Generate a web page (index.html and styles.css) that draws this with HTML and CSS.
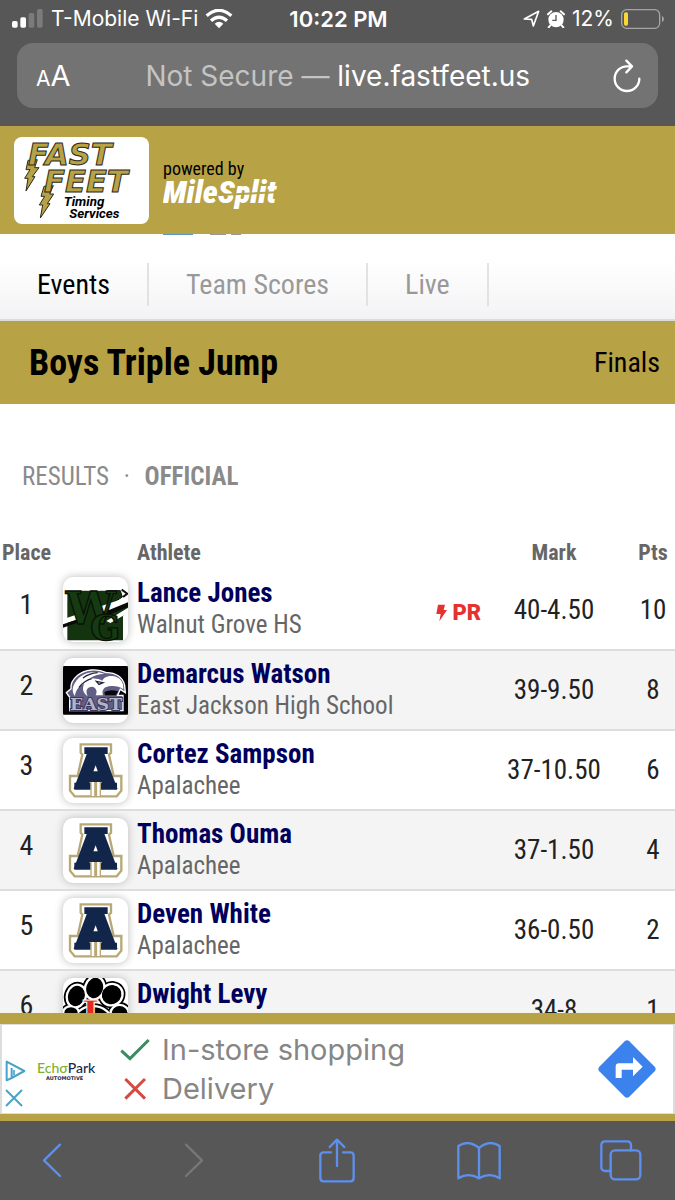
FILE: index.html
```html
<!DOCTYPE html>
<html lang="en">
<head>
<meta charset="utf-8">
<meta name="viewport" content="width=device-width, initial-scale=1">
<title>Boys Triple Jump - Finals</title>
<link rel="stylesheet" href="styles.css">
</head>
<body>
<svg class="defs" aria-hidden="true">
  <symbol id="apalachee" viewBox="0 0 195 195">
    <path d="M53 19H144V44L138 50L152 114H175V158L161 175H35L21 158V114H44L58 50L53 44Z" fill="#fff" stroke="#b8a876" stroke-width="7"/>
    <path d="M84 174V115H112V174" fill="#fff" stroke="#b8a876" stroke-width="4"/>
    <path d="M98 115V175" stroke="#b8a876" stroke-width="9"/>
    <text x="98" y="148" text-anchor="middle" class="letter" font-size="150">A</text>
    <path d="M64 28H134V48H64ZM34 134H82V155H34ZM114 134H162V155H114Z" fill="#12264b"/>
  </symbol>
  <symbol id="toes" viewBox="0 0 195 195" overflow="visible">
    <ellipse cx="40" cy="54" rx="23" ry="29" transform="rotate(18 40 54)"/><ellipse cx="95" cy="30" rx="23" ry="29" transform="rotate(16 95 30)"/><ellipse cx="146" cy="50" rx="28" ry="26" transform="rotate(-35 146 50)"/><ellipse cx="24" cy="104" rx="18" ry="14"/><ellipse cx="170" cy="106" rx="22" ry="20"/><ellipse cx="90" cy="134" rx="52" ry="44"/>
  </symbol>
</svg>

<header class="browser-top">
  <div class="status">
    <div class="status-left">
      <svg width="32" height="20" viewBox="0 0 96 60"><rect x="0" y="36" width="17" height="20" rx="5" fill="#fff"/><rect x="25" y="25" width="17" height="31" rx="5" fill="#fff"/><rect x="50" y="12" width="17" height="44" rx="5" fill="#7b7b7b"/><rect x="75" y="0" width="17" height="56" rx="5" fill="#7b7b7b"/></svg>
      <span>T-Mobile Wi-Fi</span>
      <svg width="28" height="20" viewBox="0 0 84 60" fill="none" stroke="#fff" stroke-width="10"><path d="M5 20Q42-12 79 20"/><path d="M18 35Q42 14 66 35"/><path d="M29 44Q42 33 55 44L42 58Z" fill="#fff" stroke="none"/></svg>
    </div>
    <time class="clock">10:22 PM</time>
    <div class="status-right">
      <svg width="17" height="18" viewBox="0 0 51 54"><path d="M4 27L47 4L31 48L26 28Z" fill="none" stroke="#fff" stroke-width="5" stroke-linejoin="round"/></svg>
      <svg width="18" height="18" viewBox="0 0 54 54"><circle cx="27" cy="29" r="23" fill="#fff"/><path d="M3 13L13 4M51 13L41 4M10 46L5 52M44 46L49 52" stroke="#fff" stroke-width="6" stroke-linecap="round"/><path d="M27 15V31H16" fill="none" stroke="#575757" stroke-width="4"/></svg>
      <span>12%</span>
      <svg width="44" height="20" viewBox="0 0 132 60"><rect x="2" y="2" width="114" height="56" rx="15" fill="none" stroke="#a5a5a5" stroke-width="4"/><rect x="9" y="10" width="12" height="40" rx="5" fill="#fdd535"/><path d="M123 20Q135 30 123 40Z" fill="#a5a5a5"/></svg>
    </div>
  </div>
  <div class="address">
    <button class="reader" type="button" aria-label="Page settings"><small>A</small>A</button>
    <button class="url" type="button"><span>Not Secure — </span>live.fastfeet.us</button>
    <button class="reload" type="button" aria-label="Reload"><svg width="28" height="34" viewBox="0 0 84 102" fill="none" stroke="#fff" stroke-width="7" stroke-linecap="round" stroke-linejoin="round"><path d="M54 22H42A37 37 0 1 0 79 59M40 5L57 22L40 40"/></svg></button>
  </div>
</header>

<div class="brand">
  <a class="logo" href="#" aria-label="Fast Feet Timing Services">
    <svg width="135" height="87" viewBox="42 48 405 261">
      <g class="gold">
        <path d="M84 118L112 116L104 140H117L97 167H105L78 210L84 172H74L90 146H78Z"/>
        <path d="M132 196L160 194L149 219H161L142 248H150L121 291L128 252H118L134 226H123Z"/>
        <text x="84" y="131">FAST</text><text x="132" y="212">FEET</text>
      </g>
      <g class="logo-sub"><text x="191" y="256">Timing</text><text x="208" y="292">Services</text></g>
    </svg>
  </a>
  <div class="powered">
    <span>powered by</span>
    <a href="#" aria-label="MileSplit"><svg width="120" height="30" viewBox="0 0 120 30"><text class="milesplit" x="0" y="24">MileSplit</text><path d="M56 16L120 13" stroke="#b7a245" stroke-width="2"/></svg></a>
  </div>
</div>

<nav class="tabs" aria-label="Meet">
  <svg class="peek" width="80" height="1" viewBox="0 0 80 1" aria-hidden="true"><path d="M0 0H30V1H0Z" fill="#5797c3"/><path d="M47 0H63V1H47ZM68 0H78V1H68Z" fill="#999"/></svg>
  <a href="#" aria-current="page">Events</a><a href="#">Team Scores</a><a href="#">Live</a>
</nav>

<div class="title">
  <h1>Boys Triple Jump</h1>
  <span>Finals</span>
</div>

<main class="results">
  <p class="state">RESULTS <span>·</span> <b>OFFICIAL</b></p>
  <table>
    <thead><tr><th class="place">Place</th><th class="team"></th><th class="athlete">Athlete</th><th class="flag"></th><th class="mark">Mark</th><th class="pts">Pts</th></tr></thead>
    <tbody>
      <tr><td class="place">1</td><td class="team"><svg class="tile" viewBox="0 0 195 195">
        <path d="M13 41H150L176 90L195 60V96L180 118V190H13Z" fill="#143410"/>
        <path d="M135 36H176L195 50V84L140 110Z" fill="#fff"/>
        <path d="M136 41H172L178 60L150 78L136 70Z" fill="#143410" stroke="#081207" stroke-width="3"/>
        <path d="M0 127L48 110V126L0 142ZM100 92L195 60V76L116 108ZM130 132L195 92V108L142 138Z" fill="#fff"/>
        <path d="M0 142L48 126V136L0 152ZM116 108L195 76V90L126 118Z" fill="#080b08"/>
        <path d="M176 38L193 50L180 60" fill="none" stroke="#111" stroke-width="6"/>
        <g class="slab" fill="#163b12" stroke="#081207" stroke-width="4"><text x="8" y="142" font-size="134">W</text><text x="82" y="188" font-size="106">G</text></g>
      </svg></td><td class="athlete"><a href="#">Lance Jones</a><span>Walnut Grove HS</span></td><td class="flag"><svg width="11" height="18" viewBox="0 0 33 54" aria-hidden="true"><path d="M6 2H27L23 18H33L10 52L14 30H1Z" fill="#e5322f"/></svg> PR</td><td class="mark">40-4.50</td><td class="pts">10</td></tr>
      <tr><td class="place">2</td><td class="team"><svg class="tile" viewBox="0 0 195 195">
        <path d="M0 24H195V170H0Z" fill="#020204"/>
        <path d="M20 158V118L10 104L24 92C22 78 30 64 44 52C66 34 102 30 130 44C154 42 180 56 185 82L187 104L172 94L164 112H180V158Z" fill="#625f86" stroke="#fff" stroke-width="4"/>
        <path d="M36 74C54 44 92 34 126 48C106 48 90 54 80 62C98 60 108 62 118 68C124 54 146 50 162 58C178 66 182 80 181 94C166 82 142 82 128 88C120 92 116 102 120 112H98C104 100 100 90 88 86C72 86 66 98 74 114C60 106 56 90 64 78C48 84 38 96 36 114C26 102 28 86 36 74Z" fill="#fff"/>
        <path d="M100 70L120 74L108 79ZM86 62C72 66 58 76 48 88M60 60Q78 46 104 44" fill="none" stroke="#25233f" stroke-width="4"/>
        <path d="M124 102Q142 92 166 100L158 112H126Z" fill="#08080c"/>
        <text x="99" y="156" text-anchor="middle" class="slab east">EAST</text>
      </svg></td><td class="athlete"><a href="#">Demarcus Watson</a><span>East Jackson High School</span></td><td class="flag"></td><td class="mark">39-9.50</td><td class="pts">8</td></tr>
      <tr><td class="place">3</td><td class="team"><svg class="tile"><use href="#apalachee"/></svg></td><td class="athlete"><a href="#">Cortez Sampson</a><span>Apalachee</span></td><td class="flag"></td><td class="mark">37-10.50</td><td class="pts">6</td></tr>
      <tr><td class="place">4</td><td class="team"><svg class="tile"><use href="#apalachee"/></svg></td><td class="athlete"><a href="#">Thomas Ouma</a><span>Apalachee</span></td><td class="flag"></td><td class="mark">37-1.50</td><td class="pts">4</td></tr>
      <tr><td class="place">5</td><td class="team"><svg class="tile"><use href="#apalachee"/></svg></td><td class="athlete"><a href="#">Deven White</a><span>Apalachee</span></td><td class="flag"></td><td class="mark">36-0.50</td><td class="pts">2</td></tr>
      <tr><td class="place">6</td><td class="team"><svg class="tile" viewBox="0 0 195 195">
        <use href="#toes" width="195" height="195" fill="#000" stroke="#000" stroke-width="28"/>
        <use href="#toes" width="195" height="195" fill="#fff" stroke="#fff" stroke-width="18"/>
        <use href="#toes" width="195" height="195" fill="#000" stroke="#000" stroke-width="4"/>
        <text x="82" y="152" text-anchor="middle" class="slab" font-size="118" fill="#e52a20" stroke="#fff" stroke-width="3">I</text>
      </svg></td><td class="athlete"><a href="#">Dwight Levy</a></td><td class="flag"></td><td class="mark">34-8</td><td class="pts">1</td></tr>
    </tbody>
  </table>
</main>

<aside class="ad">
  <div class="ad-box">
    <div class="choices">
      <svg width="21" height="22" viewBox="0 0 63 66"><path d="M20 24V54L58 33L5 5V61L20 54" fill="none" stroke="#4aa3c7" stroke-width="6" stroke-linejoin="round"/><path d="M27 30V46" stroke="#4aa3c7" stroke-width="5"/></svg>
      <button type="button" aria-label="Close ad"><svg width="18" height="18" viewBox="0 0 54 54"><path d="M3 3L51 51M51 3L3 51" stroke="#4aa3c7" stroke-width="6"/></svg></button>
    </div>
    <div class="echo"><div><i>Echσ</i>Park</div><small>AUTOMOTIVE</small></div>
    <ul>
      <li><svg width="30" height="24" viewBox="0 0 90 72"><path d="M4 38L30 62L86 6" fill="none" stroke="#3b8a66" stroke-width="9"/></svg>In-store shopping</li>
      <li><svg width="30" height="24" viewBox="0 0 90 72"><path d="M16 6L75 65M75 6L16 65" fill="none" stroke="#d64a3f" stroke-width="9"/></svg>Delivery</li>
    </ul>
    <a class="directions" href="#" aria-label="Directions"><svg width="58" height="58" viewBox="0 0 174 174"><path d="M80 4Q87-2 94 4L170 80Q176 87 170 94L94 170Q87 176 80 170L4 94Q-2 87 4 80Z" fill="#3b82ed"/><path d="M53 114V80Q53 70 63 70H105V51L134 80L105 109V89H71V114Z" fill="#fff"/></svg></a>
  </div>
</aside>

<footer class="toolbar">
  <button type="button" aria-label="Back"><svg width="20" height="35" viewBox="0 0 60 105"><path d="M54 5L6 52L54 99"/></svg></button>
  <button type="button" aria-label="Forward" disabled><svg width="20" height="35" viewBox="0 0 60 105"><path d="M6 5L54 52L6 99"/></svg></button>
  <button type="button" aria-label="Share"><svg width="36" height="46" viewBox="0 0 108 138"><path d="M36 43H14Q4 43 4 53V120Q4 130 14 130H94Q104 130 104 120V53Q104 43 94 43H72M54 84V6M32 27L54 5L76 27"/></svg></button>
  <button type="button" aria-label="Bookmarks"><svg width="44" height="38" viewBox="0 0 132 114"><path d="M66 18Q34-8 4 12V109Q34 90 66 109Q98 90 128 109V12Q98-8 66 18V109"/></svg></button>
  <button type="button" aria-label="Tabs"><svg width="42" height="41" viewBox="0 0 126 123"><path d="M32 93H16Q4 93 4 81V16Q4 4 16 4H81Q93 4 93 16V31"/><rect x="32" y="31" width="89" height="87" rx="13"/></svg></button>
</footer>
</body>
</html>
```
FILE: styles.css
```css
* { box-sizing: border-box; }
body {
  margin: 0;
  height: 100vh;
  display: flex;
  flex-direction: column;
  overflow: hidden;
  background: #fff;
  color: #000;
  font-family: "Roboto Condensed", "Liberation Sans Narrow", Roboto, sans-serif;
  font-size: 28px;
}
body > * { flex: none; }
a { color: inherit; text-decoration: none; }
button { border: 0; padding: 0; margin: 0; background: none; color: inherit; font: inherit; }
svg { display: block; }
.defs { position: absolute; width: 0; height: 0; }
.slab { font-family: "DejaVu Serif", serif; font-weight: 700; }
.letter { font-family: "DejaVu Sans", sans-serif; font-weight: 700; fill: #12264b; stroke: #12264b; stroke-width: 12px; }
.east { font-size: 52px; fill: #b5b3c2; stroke: #3a3760; stroke-width: 6px; paint-order: stroke; }

.browser-top {
  background: #575757;
  color: #fff;
  padding: 0 17px 18px;
  font-family: Inter, sans-serif;
}
.status {
  display: grid;
  grid-template-columns: 1fr auto 1fr;
  align-items: center;
  height: 43px;
  padding-bottom: 6px;
  margin: 0 -7px 0 -5px;
  font-size: 21px;
}
.status-left, .status-right { display: flex; align-items: center; gap: 7px; }
.status-right { justify-content: flex-end; }
.clock { font-size: 22px; font-weight: 600; }
.address {
  display: flex;
  align-items: center;
  height: 65px;
  padding: 0 17px 0 19px;
  border-radius: 16px;
  background: #737373;
  font-size: 28px;
}
.reader { font-size: 29px; }
.reader small { font-size: 21px; }
.url { flex: 1; padding-right: 8px; }
.url span { color: #c4c4c4; }

.brand {
  display: flex;
  align-items: center;
  gap: 14px;
  height: 108px;
  padding: 0 14px;
  background: #b7a245;
}
.logo { background: #fff; border-radius: 8px; }
.gold { font: italic 700 92px "DejaVu Sans", sans-serif; fill: #b7a245; stroke: #2b2a1c; stroke-width: 3px; }
.logo-sub { font: italic 700 40px Roboto, sans-serif; }
.powered { display: flex; flex-direction: column; font-size: 18px; line-height: 20px; padding-top: 8px; }
.milesplit { font: italic 900 32px "Roboto Condensed", Roboto, sans-serif; fill: #fff; }

.tabs {
  position: relative;
  display: flex;
  align-items: center;
  height: 87px;
  padding-top: 16px;
  border-bottom: 2px solid #dcdcdc;
  background: linear-gradient(#fff 30%, #f3f3f5);
  color: #999;
}
.tabs a { padding: 0 37px; line-height: 43px; border-right: 2px solid #e2e2e2; }
.tabs [aria-current] { color: #000; }
.peek { position: absolute; left: 163px; top: 0; }

.title {
  display: flex;
  align-items: center;
  justify-content: space-between;
  height: 83px;
  padding: 0 15px 0 29px;
  background: #b7a245;
}
.title h1 { margin: 0; font-size: 36px; }

.results { flex: 1 1 0; min-height: 0; overflow: hidden; }
.state { margin: 56px 22px 0; font-size: 25px; line-height: 34px; color: #8a8a8a; }
.state span { margin: 0 9px; }
table { width: 100%; margin-top: 40px; border-collapse: collapse; table-layout: fixed; }
th { height: 36px; padding: 0; font-size: 22px; color: #666; }
td { height: 80px; padding: 0; border-bottom: 2px solid #ddd; color: #222; }
tr:nth-child(even) td { background: #f4f4f4; }
.place { width: 53px; text-align: center; }
td.place { padding-bottom: 10px; }
.team { width: 84px; }
.tile {
  width: 65px;
  height: 65px;
  margin-left: 10px;
  border-radius: 10px;
  background: #fff;
  box-shadow: 0 0 8px #bbb;
}
.athlete { text-align: left; white-space: nowrap; }
td.athlete { vertical-align: top; padding-top: 8px; }
.athlete a, .athlete span { display: block; line-height: 31px; }
.athlete a { color: #00005c; font-weight: 700; font-size: 27px; }
.athlete span { color: #666; font-size: 25px; }
.flag { width: 50px; font: 900 22px Roboto, sans-serif; white-space: nowrap; }
td.flag { color: #e5322f; padding-top: 6px; }
.flag svg { display: inline-block; vertical-align: -2px; }
.mark { width: 136px; text-align: center; }
.pts { width: 53px; padding-left: 9px; text-align: center; }
td.mark, td.pts { font-size: 27px; }
th.place { text-align: left; padding-left: 2px; }

.ad { padding: 11px 0 7px; background: #b7a245; }
.ad-box {
  display: flex;
  align-items: center;
  height: 90px;
  padding: 0 17px 0 3px;
  border: 1px solid #ddd;
  border-width: 1px 2px;
  background: #fff;
}
.choices { display: grid; gap: 7px; align-self: end; padding-bottom: 6px; width: 32px; }
.echo { width: 83px; padding-top: 2px; font: 500 14px/15px Lato, sans-serif; color: #17294d; }
.echo i { color: #7fb02c; font-style: normal; }
.echo small { display: block; font: 700 5px/6px "DejaVu Sans", sans-serif; padding-left: 9px; }
.ad ul { flex: 1; margin: 0; padding: 0; list-style: none; font: 400 29px/39px Inter, sans-serif; color: #868686; }
.ad li { display: flex; align-items: center; gap: 12px; }

.toolbar {
  display: flex;
  align-items: center;
  justify-content: space-between;
  height: 79px;
  padding: 0 33px 0 31px;
  background: #575757;
}
.toolbar button { display: flex; justify-content: center; width: 42px; }
.toolbar svg { flex: none; fill: none; stroke: #5d90ee; stroke-width: 7; stroke-linecap: round; stroke-linejoin: round; }
.toolbar :disabled svg { stroke: #777; }
```
